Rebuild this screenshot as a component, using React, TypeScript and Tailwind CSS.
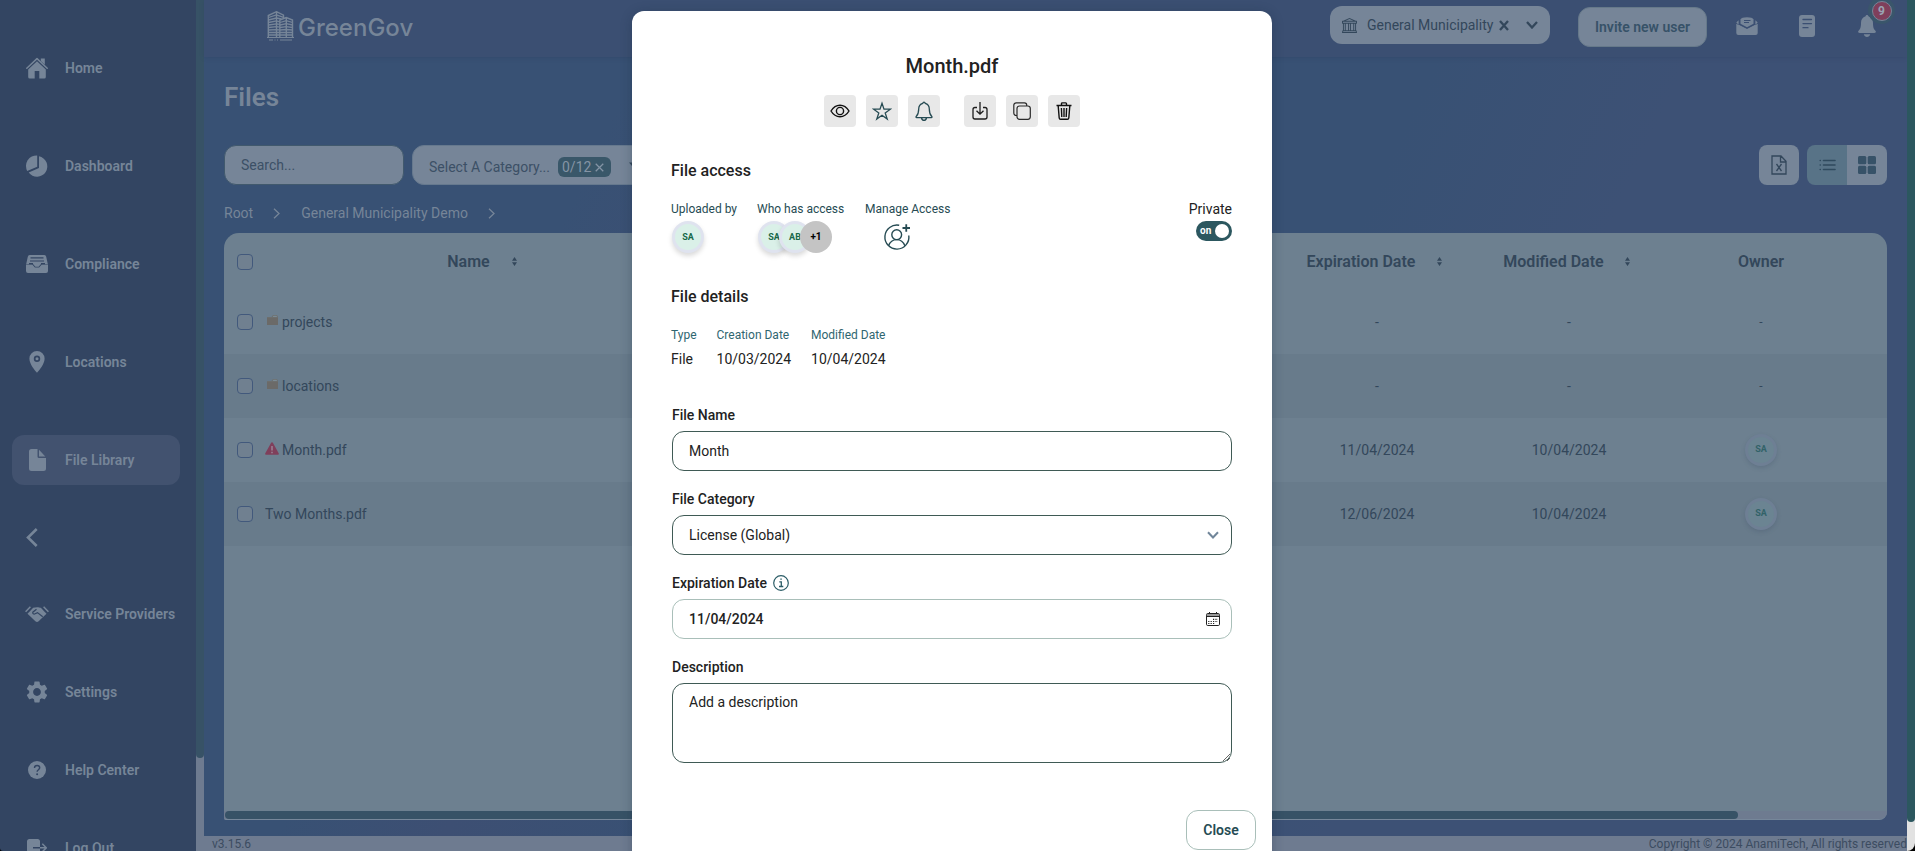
import React from 'react';
import { BsBank } from 'react-icons/bs';
import { MdSettings } from 'react-icons/md';

interface IconProps {
  className?: string;
}

const HomeIcon: React.FC<IconProps> = ({ className }) => (
  <svg viewBox="0 0 22 22" className={className} fill="currentColor">
    <path d="M11 4.3 2.2 12.4V20a1.5 1.5 0 0 0 1.5 1.5h5V14h4.6v7.500h5a1.500 1.500 0 0 0 1.500-1.500v-7.600z" />
    <path d="M.8 11.200 11 1.600l10.200 9.600" fill="none" stroke="currentColor" strokeWidth="1.500" strokeLinecap="round" strokeLinejoin="round" />
    <path d="M14.800 1.500h4v6.300l-4-3.700z" />
  </svg>
);

const PieIcon: React.FC<IconProps> = ({ className }) => (
  <svg viewBox="0 0 22 22" className={className} fill="currentColor">
    <path d="M11.200.4v11.400L1.200 16A10.700 10.700 0 0 1 11.200.4z" />
    <path d="M13 1.300a10.300 10.300 0 1 1-10.300 16.200L13 12.900z" />
  </svg>
);

const InboxIcon: React.FC<IconProps> = ({ className }) => (
  <svg viewBox="0 0 22 18" className={className} fill="currentColor">
    <path d="M3.800 0h14.400a2 2 0 0 1 2 1.700L21.800 9H15l-2.400 2.800H9.400L7 9H.2l1.600-7.300A2 2 0 0 1 3.800 0z" />
    <path d="M0 9.600h6.300l2.600 3h4.200l2.600-3H22V16a2 2 0 0 1-2 2H2a2 2 0 0 1-2-2z" />
    <path d="M4.500 2.900h13M4 6h14M3 8.700h4M15 8.700h4" stroke="#334562" strokeWidth="1.200" />
  </svg>
);

const PinIcon: React.FC<IconProps> = ({ className }) => (
  <svg viewBox="0 0 16 22" className={className} fill="currentColor">
    <path fillRule="evenodd" d="M8 0a7.600 7.600 0 0 1 7.600 7.700C15.600 13 10 19.500 8 21.800 6 19.500.4 13 .4 7.700A7.600 7.600 0 0 1 8 0zm0 4.500a3.200 3.200 0 1 0 0 6.400 3.200 3.200 0 0 0 0-6.400z" />
    <circle cx="8" cy="7.700" r="1.500" />
  </svg>
);

const FileIcon: React.FC<IconProps> = ({ className }) => (
  <svg viewBox="0 0 17 22" className={className} fill="currentColor">
    <path d="M2.500 0h6v7.500A1.500 1.500 0 0 0 10 9h7v10.500a2.500 2.500 0 0 1-2.500 2.500h-12A2.500 2.500 0 0 1 0 19.500v-17A2.500 2.500 0 0 1 2.500 0z" />
    <path d="M10 .8 16.300 7.500H10z" />
  </svg>
);

const HandshakeIcon: React.FC<IconProps> = ({ className }) => (
  <svg viewBox="0 0 24 16" className={className} fill="none">
    <path d="M.6 5.800 5.400.8M23.400 5.800 18.600.8" stroke="currentColor" strokeWidth="1.500" />
    <path d="M2.500 7.700 8.200 1.800c2-.9 6-.9 7.600 0l5.700 5.900-7.900 7.600c-1 .9-2.200.9-3.200 0z" fill="currentColor" />
    <path d="m11.500 3.200-3.700 3c-.5 1.400 1 2.300 2.300 1.600l2.400-1.200 5.200 4.200" stroke="#334562" strokeWidth="1.200" />
  </svg>
);

const HelpIcon: React.FC<IconProps> = ({ className }) => (
  <svg viewBox="0 0 18 18" className={className} fill="none">
    <circle cx="9" cy="9" r="9" fill="currentColor" />
    <path d="M6.500 7c0-3.400 5.200-3.200 5.200-.2 0 1.900-2.600 1.900-2.600 4" stroke="#334562" strokeWidth="1.400" />
    <circle cx="9.100" cy="13.200" r="1" fill="#334562" />
  </svg>
);

const LogoutIcon: React.FC<IconProps> = ({ className }) => (
  <svg viewBox="0 0 20 18" className={className} fill="none">
    <path d="M2.500 0h8A2.500 2.500 0 0 1 13 2.500v13a2.500 2.500 0 0 1-2.500 2.500h-8A2.500 2.500 0 0 1 0 15.500v-13A2.500 2.500 0 0 1 2.500 0z" fill="currentColor" />
    <path d="M6 8.800h8" stroke="#334562" strokeWidth="1.400" />
    <path d="M13 8.800h6M15.300 4.800l4 4-4 4" stroke="currentColor" strokeWidth="1.500" />
  </svg>
);

// two towers with slatted floors
const LogoIcon: React.FC<IconProps> = ({ className }) => (
  <svg viewBox="0 0 27 30" className={className} fill="none" stroke="currentColor">
    <path d="M1.300 26V4.500L9.500.7l7 3.500V7M9.500 1v25M12.800 26V9l6.500-2.500L25.500 9v17M19.300 7v19" strokeWidth="1.400" />
    <path d="M1.500 6.500l8-2.600 7 2.400M1.500 9l8-2 5 1M1.500 11.500l8-1.600 3.300.9M1.500 14l8-1.200 3.300.6M1.500 16.500l8-.8 3.300.4M1.500 19l8-.4 3.300.2M1.500 21.500h11.300M1.500 24h11.300" strokeWidth="1.300" />
    <path d="m13 11.500 6.300-1.800 6.200 1.800M13 14l6.300-1.300 6.200 1.300M13 16.500l6.300-.9 6.200.9M13 19l6.300-.5 6.200.5M13 21.500h12.500M13 24h12.500" strokeWidth="1.300" />
    <path d="M0 26.500h27M2 29h4M7.500 29h1M10 29h1M13 29h12" strokeWidth="1.200" />
  </svg>
);

const MailIcon: React.FC<IconProps> = ({ className }) => (
  <svg viewBox="0 0 22 18" className={className} fill="none">
    <path d="M.3 6.800 11 12.500l10.700-5.700V16a2 2 0 0 1-2 2H2.300a2 2 0 0 1-2-2z" fill="currentColor" />
    <path d="M.3 5.500 2.600 3.200v4.500zM21.700 5.500l-2.300-2.300v4.500z" fill="currentColor" />
    <path d="M4.500 2.600C5 1 7.500.2 11 .2s6 .8 6.500 2.400v4.200L11 10.300 4.500 6.800z" fill="currentColor" />
    <path d="M2.600 7.700 11 12l8.400-4.300v2.200L11 14 2.600 9.900z" fill="currentColor" />
    <path d="M8 3.500h6.500M8 5.500h5" stroke="#3b4f72" strokeWidth="1" />
  </svg>
);

const NoteIcon: React.FC<IconProps> = ({ className }) => (
  <svg viewBox="0 0 16 22" className={className} fill="none">
    <rect width="16" height="22" rx="3" fill="currentColor" />
    <path d="M4 4.500h8.500M4 8.600h8.500M4 12.700h5" stroke="#3b4f72" strokeWidth="1.300" strokeLinecap="round" />
  </svg>
);

const BellSolid: React.FC<IconProps> = ({ className }) => (
  <svg viewBox="0 0 18 22" className={className} fill="currentColor">
    <path d="M9 0c.9 0 1.300.6 1.400 1.300 3 .8 4.600 3.300 4.600 6.700 0 4.500.8 6 2.400 7.700 1 1.100.4 2.300-1 2.300H1.600c-1.400 0-2-1.200-1-2.300C2.200 14 3 12.500 3 8c0-3.400 1.600-5.900 4.600-6.700C7.700.6 8.100 0 9 0zM5.800 19.200h6.400C11.700 21 10.500 22 9 22s-2.700-1-3.200-2.800z" />
  </svg>
);

const SortIcon = () => (
  <svg viewBox="0 0 5 9" className="h-[9px] w-[5px]" fill="#33475b">
    <path d="M2.500 0 5 3.700H0zM2.500 9 5 5.300H0z" />
  </svg>
);

const Chevron: React.FC<IconProps> = ({ className }) => (
  <svg viewBox="0 0 7 11" className={className} fill="none" stroke="currentColor" strokeWidth="1.300">
    <path d="m1 .8 5 4.700-5 4.700" />
  </svg>
);

const FolderIcon = () => (
  <svg viewBox="0 0 11 10" className="h-[10px] w-[11px]">
    <path d="M0 2h4.500L6 0h4l1 2v8H0z" fill="#6d6f6e" />
    <path d="M6.300.8h3.300l.4 1.200H5.600z" fill="#7b8b95" />
    <path d="M0 3h11v7H0z" fill="#6b6a68" />
  </svg>
);

const WarningIcon = () => (
  <svg viewBox="0 0 14 13" className="h-[13px] w-[14px]">
    <path d="M7 .3c.5 0 .8.2 1 .6l5.700 10.300c.4.800 0 1.600-.9 1.600H1.200c-.9 0-1.300-.8-.9-1.600L6 .9C6.200.5 6.500.3 7 .3z" fill="#7f3f5b" />
    <path d="M7 4v4.500M7 9.700v1.500" stroke="#9a8496" strokeWidth="1.500" />
  </svg>
);

const navTop = [
  { label: 'Home', icon: <HomeIcon className="w-[22px]" /> },
  { label: 'Dashboard', icon: <PieIcon className="w-[22px]" /> },
  { label: 'Compliance', icon: <InboxIcon className="w-[22px]" /> },
  { label: 'Locations', icon: <PinIcon className="w-4" /> },
  { label: 'File Library', icon: <FileIcon className="w-[17px]" />, active: true },
];

const navBottom = [
  { label: 'Service Providers', icon: <HandshakeIcon className="w-6" /> },
  { label: 'Settings', icon: <MdSettings className="size-[26px]" /> },
  { label: 'Help Center', icon: <HelpIcon className="w-[18px]" /> },
  { label: 'Log Out', icon: <LogoutIcon className="w-[20px]" /> },
];

const NavItem: React.FC<{ label: string; icon: React.ReactNode; active?: boolean }> = ({ label, icon, active }) => (
  <div className={`flex h-[50px] w-[168px] shrink-0 items-center rounded-[12px] ${active ? 'bg-[#42526f]' : ''}`}>
    <div className="flex w-[50px] justify-center">{icon}</div>
    <span className="ml-[3px] text-[14px] font-semibold whitespace-nowrap">{label}</span>
  </div>
);

const Sidebar = () => (
  <aside className="flex h-full w-[204px] shrink-0 bg-[#334562] text-[#768598]">
    <nav className="flex w-[196px] flex-col overflow-hidden pl-3">
      <div className="flex flex-col gap-12 pt-[43px]">
        {navTop.map((item) => (
          <NavItem key={item.label} {...item} />
        ))}
      </div>
      <div className="flex h-[104px] shrink-0 items-center pl-[14px]">
        <svg viewBox="0 0 12 19" className="h-[19px] w-3" fill="none" stroke="currentColor" strokeWidth="2.600">
          <path d="M10.700 1 2 9.500l8.700 8.500" />
        </svg>
      </div>
      <div className="flex flex-col gap-7">
        {navBottom.map((item) => (
          <NavItem key={item.label} {...item} />
        ))}
      </div>
    </nav>
    <div className="h-full w-2 bg-[#6e7b90]">
      <div className="h-[758px] rounded-b-full bg-[#375266]" />
    </div>
  </aside>
);

const Header = () => (
  <header className="flex h-[57px] shrink-0 items-start bg-[#3b4f72] pl-[63px] text-[#768598] shadow-[0_1px_4px_rgba(40,60,90,0.25)]">
    <LogoIcon className="mt-[11px] h-[30px] w-[27px]" />
    <span className="mt-[12px] ml-[4px] font-['Inter',sans-serif] text-[24px] leading-[32px] font-medium">GreenGov</span>
    <div className="mt-[6px] ml-auto flex h-[38px] w-[220px] items-center rounded-[12px] bg-[#768598] pl-3 text-[#33475b]">
      <BsBank className="size-[15px]" />
      <span className="ml-[10px] w-[128px] text-[14px] whitespace-nowrap">General Municipality</span>
      <svg viewBox="0 0 10 11" className="ml-[4px] w-[10px]" fill="none" stroke="currentColor" strokeWidth="2.300">
        <path d="m1 1 8 9M9 1 1 10" />
      </svg>
      <svg viewBox="0 0 12 8" className="ml-[17px] w-3" fill="none" stroke="currentColor" strokeWidth="2.300">
        <path d="m1 1 5 5.500L11 1" />
      </svg>
    </div>
    <button className="mt-[7px] ml-[28px] h-10 w-[129px] rounded-[12px] border border-[#66798a] bg-[#768598] text-[14px] font-semibold text-[#375268]">Invite new user</button>
    <MailIcon className="mt-[17px] ml-[29px] w-[22px]" />
    <NoteIcon className="mt-[15px] ml-[41px] w-4" />
    <div className="relative mt-[15px] mr-[31px] ml-[43px] w-[18px]">
      <BellSolid className="w-[18px]" />
      <div className="absolute -top-[18px] left-[10px] flex size-[27px] items-center justify-center rounded-full bg-[#3a566b]">
        <div className="flex size-5 items-center justify-center rounded-full border border-[#768598] bg-[#7f3f5b] text-[12px] font-bold text-[#9aa3b3]">9</div>
      </div>
    </div>
  </header>
);

const Toolbar = () => (
  <div className="flex h-10 items-center text-[14px] text-[#3c5066]">
    <div className="flex h-10 w-[180px] items-center rounded-[12px] border border-[#41596d] bg-[#768598] pl-4">
      <span>Search...</span>
    </div>
    <div className="ml-2 flex h-10 w-[260px] items-center rounded-[12px] border border-[#66798e] bg-[#768598] pl-4">
      <span className="mt-1 w-[121px] whitespace-nowrap">Select A Category...</span>
      <span className="mt-1 ml-[8px] flex h-5 w-[53px] items-center rounded-[6px] bg-[#395769] pl-1 text-[#8494a5]">
        0/12
        <svg viewBox="0 0 10 10" className="ml-[4px] w-[9px]" fill="none" stroke="currentColor" strokeWidth="1.400">
          <path d="m.8.8 8.400 8.400M9.200.8.8 9.200" />
        </svg>
      </span>
      <svg viewBox="0 0 10 7" className="ml-[18px] w-[9px]" fill="#33475b">
        <path d="M0 .5h10L5 6.500z" />
      </svg>
    </div>
    <div className="ml-auto flex size-10 items-center justify-center rounded-[8px] bg-[#768598]">
      <svg viewBox="0 0 16 20" className="h-5 w-4" fill="none" stroke="#33475b" strokeWidth="1.300">
        <path d="M1 1h9l5 5.300V19H1zM9.500 1v6H15M5.500 9l5 7M10.500 9l-5 7" />
      </svg>
    </div>
    <div className="ml-2 flex overflow-hidden rounded-[8px]">
      <div className="flex size-10 items-center justify-center bg-[#587387]">
        <svg viewBox="0 0 17 12" className="w-[17px]" fill="none" stroke="#2f4a5e" strokeWidth="1.600" strokeLinecap="round">
          <path d="M4.500 1.500H16M4.500 6H16M4.500 10.500H16M1.200 1.500h.1M1.200 6h.1M1.200 10.500h.1" />
        </svg>
      </div>
      <div className="flex size-10 items-center justify-center bg-[#768598]">
        <svg viewBox="0 0 18 18" className="size-[18px]" fill="#375268">
          <rect width="8.300" height="8.300" rx="1.500" />
          <rect x="9.700" width="8.300" height="8.300" rx="1.500" />
          <rect y="9.700" width="8.300" height="8.300" rx="1.500" />
          <rect x="9.700" y="9.700" width="8.300" height="8.300" rx="1.500" />
        </svg>
      </div>
    </div>
  </div>
);

const rows = [
  { name: 'projects', kind: 'folder', expires: '-', modified: '-', owner: '' },
  { name: 'locations', kind: 'folder', expires: '-', modified: '-', owner: '' },
  { name: 'Month.pdf', kind: 'alert', expires: '11/04/2024', modified: '10/04/2024', owner: 'SA' },
  { name: 'Two Months.pdf', kind: 'file', expires: '12/06/2024', modified: '10/04/2024', owner: 'SA' },
];

const Checkbox = () => <div className="size-4 rounded-[4px] border border-[#42597c] bg-[#708090]" />;

const FilesTable = () => (
  <div className="flex h-[587px] flex-col overflow-hidden rounded-t-[15px] rounded-br-[8px] rounded-bl-[2px] border-b border-[#76879a] bg-[#6d8090] text-[#33475b]">
    <div className="flex h-[57px] shrink-0 items-center text-[16px] font-semibold">
      <div className="w-[40px] pl-[13px]"><Checkbox /></div>
      <div className="flex w-[436px] items-center justify-center gap-[22px]">Name <SortIcon /></div>
      <div className="flex-1" />
      <div className="flex w-[192px] items-center justify-center gap-[22px] pr-[5px]">Expiration Date <SortIcon /></div>
      <div className="flex w-[192px] items-center justify-center gap-[21px] pr-[5px]">Modified Date <SortIcon /></div>
      <div className="mr-[30px] w-[192px] text-center">Owner</div>
    </div>
    {rows.map((row) => (
      <div key={row.name} className="flex h-16 shrink-0 items-center text-[14px] even:bg-[#6d8090] odd:bg-[#687b8b]">
        <div className="w-[41px] pl-[13px]"><Checkbox /></div>
        <div className="flex items-center">
          {row.kind === 'folder' && <div className="mr-[4px] -mt-[4px] ml-[2px]"><FolderIcon /></div>}
          {row.kind === 'alert' && <div className="mr-[3px] -mt-[4px]"><WarningIcon /></div>}
          {row.name}
        </div>
        <div className="flex-1" />
        <div className="w-[192px] text-center">{row.expires}</div>
        <div className="w-[192px] text-center">{row.modified}</div>
        <div className="mr-[30px] flex w-[192px] justify-center">
          {row.owner ? (
            <div className="flex size-8 items-center justify-center rounded-full border-[3px] border-[#6e7f94] bg-[#6b8492] text-[9px] font-bold text-[#326268] shadow-[0_2px_4px_rgba(60,75,100,0.25)]">{row.owner}</div>
          ) : (
            <span className="text-[12px]">-</span>
          )}
        </div>
      </div>
    ))}
    <div className="flex-1" />
    <div className="h-2 shrink-0 bg-[#6e7b90]">
      <div className="ml-px h-2 w-[1513px] rounded-full bg-[#375266]" />
    </div>
  </div>
);

const ActionButton: React.FC<{ children: React.ReactNode; className?: string }> = ({ children, className = '' }) => (
  <button className={`flex size-8 items-center justify-center rounded-[4px] bg-[#e8e8e8] ${className}`}>{children}</button>
);

const Actions = () => (
  <div className="flex justify-center gap-[10px]">
    <ActionButton>
      <svg viewBox="0 0 20 14" className="-ml-px w-5" fill="none" stroke="#111" strokeWidth="1.400">
        <path d="M1 7c2.300-3.800 5.300-5.800 9-5.800S16.700 3.200 19 7c-2.300 3.800-5.300 5.800-9 5.800S3.300 10.800 1 7z" />
        <circle cx="10" cy="7" r="3.600" />
      </svg>
    </ActionButton>
    <ActionButton>
      <svg viewBox="0 0 20 20" className="w-5" fill="none" stroke="#264b53" strokeWidth="1.300" strokeLinejoin="miter">
        <path d="m10 2.200 2 6h6.400l-5.200 3.700 2 6.200-5.200-3.900-5.200 3.900 2-6.200L1.600 8.200H8z" />
      </svg>
    </ActionButton>
    <ActionButton>
      <svg viewBox="0 0 18 20" className="w-[18px]" fill="none" stroke="#264b53" strokeWidth="1.300">
        <path d="M9 1.200c-.6 0-1 .4-1.200 1.100C5 3 3.700 5.200 3.700 8c0 4.500-1 6-2.500 7.500-.4.500-.2 1.100.4 1.100h14.800c.6 0 .8-.6.4-1.100C15.300 14 14.300 12.500 14.300 8c0-2.800-1.300-5-4.100-5.700C10 1.600 9.600 1.200 9 1.200zM6.500 17c.3 1.500 1.200 2.300 2.500 2.300s2.200-.8 2.500-2.300" />
      </svg>
    </ActionButton>
    <ActionButton className="ml-[14px]">
      <svg viewBox="0 0 16 18" className="w-4" fill="none" stroke="#1d1d1d" strokeWidth="1.300">
        <path d="M5 5.500H3a2 2 0 0 0-2 2V15a2 2 0 0 0 2 2h10a2 2 0 0 0 2-2V7.500a2 2 0 0 0-2-2h-2M8 0v12M4.500 8.700 8 12.200l3.500-3.500" />
      </svg>
    </ActionButton>
    <ActionButton>
      <svg viewBox="0 0 18 18" className="-ml-px w-[18px]" fill="none" stroke="#2a2a2a" strokeWidth="1.200">
        <rect x="4" y="4" width="13.300" height="13.300" rx="2.500" />
        <path d="M4 13.500H3.200A2.400 2.400 0 0 1 .8 11.100V3.200A2.400 2.400 0 0 1 3.200.8h8.300a2.200 2.200 0 0 1 2.200 2.200v1" />
      </svg>
    </ActionButton>
    <ActionButton>
      <svg viewBox="0 0 16 18" className="w-4" fill="none" stroke="#111" strokeWidth="1.400">
        <path d="M.5 3.500h15M5.500 3V1.700c0-.5.300-.8.800-.8h3.400c.5 0 .8.300.8.800V3M2.200 4l1 12c.1.800.6 1.300 1.300 1.300h7c.7 0 1.200-.5 1.300-1.300l1-12M8 6v9M5.400 6l.4 9M10.600 6l-.4 9" />
      </svg>
    </ActionButton>
  </div>
);

const Avatar: React.FC<{ label: string; className?: string }> = ({ label, className = '' }) => (
  <div className={`flex size-8 items-center justify-center rounded-full border-[3px] border-[#dfe3ef] bg-[#daf0e8] text-[9px] font-bold text-[#17694a] shadow-[0_3px_5px_rgba(0,0,0,0.15)] ${className}`}>{label}</div>
);

const ManageIcon = () => (
  <svg viewBox="0 0 28 28" className="h-7 w-7" fill="none" stroke="#264b53" strokeWidth="1.400">
    <path d="M16.200 2.300A12 12 0 1 0 25.800 12.500" />
    <circle cx="13.700" cy="11.700" r="4.900" />
    <path d="M5.500 22.800c1.500-4 4.500-6.200 8.200-6.200s6.700 2.200 8.200 6.200" />
    <path d="M19.500 5H27M23.250 1.200v7.600" strokeWidth="1.800" />
  </svg>
);

const Label: React.FC<{ children: React.ReactNode }> = ({ children }) => (
  <div className="flex h-8 items-center text-[14px] font-medium">{children}</div>
);

const FileModal = () => (
  <div className="absolute inset-0 flex items-start pt-[11px] pl-[632px]">
    <div className="h-[860px] w-[640px] rounded-t-[12px] bg-white px-10 text-[#222] shadow-[0_2px_12px_rgba(20,40,60,0.3)]">
      <h2 className="pt-[41px] text-center text-[20px] leading-[28px] font-medium">Month.pdf</h2>
      <div className="mt-[15px]"><Actions /></div>

      <h3 className="mt-[32px] -ml-px text-[16px] leading-[24px] font-medium">File access</h3>
      <div className="mt-[17px] flex h-[54px] items-start text-[12px] leading-[18px] text-[#264b53]">
        <div className="w-[86px]">
          <span className="-ml-px">Uploaded by</span>
          <Avatar label="SA" className="mt-[3px]" />
        </div>
        <div className="w-[107px]">
          <span className="-ml-px">Who has access</span>
          <div className="mt-[3px] flex">
            <Avatar label="SA" />
            <Avatar label="AB" className="-ml-[11px]" />
            <div className="z-10 -ml-[11px] flex size-8 items-center justify-center rounded-full bg-[#c4c4c4] text-[10px] font-bold text-black">+1</div>
          </div>
        </div>
        <div>
          Manage Access
          <div className="mt-[5px] ml-[18px]"><ManageIcon /></div>
        </div>
        <div className="-mt-px ml-auto flex flex-col items-end">
          <span className="text-[14px] leading-[20px] text-[#222]">Private</span>
          <div className="mt-[2px] flex h-5 w-9 items-center justify-between rounded-full bg-[#2c575f] pr-[3px] pl-[4px] text-[10px] font-bold text-white">
            on
            <span className="size-[14px] rounded-full bg-white" />
          </div>
        </div>
      </div>

      <h3 className="mt-[31px] -ml-px text-[16px] leading-[24px] font-medium">File details</h3>
      <div className="mt-[17px] flex gap-5 text-[14px] leading-[20px]">
        {[['Type', 'File'], ['Creation Date', '10/03/2024'], ['Modified Date', '10/04/2024']].map(([k, v]) => (
          <div key={k} className="-ml-px pr-px">
            <div className="text-[12px] leading-[18px] text-[#2f6670]">{k}</div>
            <div className="mt-[5px]">{v}</div>
          </div>
        ))}
      </div>

      <div className="mt-[30px] text-[14px]">
        <Label>File Name</Label>
        <div className="flex h-10 items-center rounded-[12px] border border-[#3f5a55] px-4">Month</div>
        <div className="mt-3"><Label>File Category</Label></div>
        <div className="flex h-10 items-center justify-between rounded-[12px] border border-[#3f5a55] pr-3 pl-4">
          License (Global)
          <svg viewBox="0 0 12 8" className="w-3" fill="none" stroke="#71869a" strokeWidth="2">
            <path d="m1 1.200 5 5.300 5-5.300" />
          </svg>
        </div>
        <div className="mt-3">
          <Label>
            Expiration Date
            <svg viewBox="0 0 16 16" className="ml-[6px] size-4" fill="none" stroke="#2c5d67" strokeWidth="1.200">
              <circle cx="8" cy="8" r="7.300" />
              <path d="M6.300 6.800h2v4.500M6 11.500h4.300M7.300 4.200h1.500" strokeWidth="1.300" />
            </svg>
          </Label>
        </div>
        <div className="flex h-10 items-center justify-between rounded-[12px] border border-[#a9bfb9] pr-[11px] pl-4 font-medium">
          11/04/2024
          <svg viewBox="0 0 14 14" className="size-[14px]" fill="none" stroke="#222">
            <rect x=".5" y="1.500" width="13" height="12" rx="1.200" />
            <path d="M.5 3h13" stroke="#777" strokeWidth="1.500" />
            <path d="M.5 4.500h13M3.500 0v2M10.500 0v2" />
            <path d="M7 7.300h5M2.200 9.500h9.800M2.200 11.500h7" strokeDasharray="1.200 1.200" strokeWidth="1.200" />
          </svg>
        </div>
        <div className="mt-3"><Label>Description</Label></div>
        <textarea
          className="block h-20 w-full rounded-[12px] border border-[#3f5a55] px-4 py-[8px] leading-[20px] outline-none"
          defaultValue="Add a description"
        />
      </div>
      <div className="mt-[47px] -mr-6 flex justify-end">
        <button className="h-10 w-[70px] rounded-[12px] border border-[#a9bfb9] text-[14px] font-semibold text-[#264b53]">Close</button>
      </div>
    </div>
  </div>
);

export default function App() {
  return (
    <div className="h-[851px] w-full bg-black font-['Roboto',sans-serif]">
      <div className="relative flex h-full overflow-hidden rounded-br-[8px] rounded-bl-[3px]">
        <Sidebar />
        <main className="flex min-w-0 flex-1 flex-col bg-[linear-gradient(115deg,#385174_0%,#385174_22%,#3d4f73_30%,#385174_42%,#385174_60%,#3d5175_72%,#3d5175_100%)]">
          <Header />
          <div className="px-5">
            <h1 className="mt-[22px] text-[26px] leading-[36px] font-semibold text-[#768598]">Files</h1>
            <div className="mt-[30px]"><Toolbar /></div>
            <div className="mt-[16px] mb-[8px] flex h-6 items-center text-[14px] whitespace-nowrap text-[#768598]">
              <span>Root</span>
              <Chevron className="ml-[20px] w-[7px]" />
              <span className="ml-[21px]">General Municipality Demo</span>
              <Chevron className="ml-[20px] w-[7px]" />
            </div>
            <FilesTable />
          </div>
          <footer className="mt-auto flex h-[15px] justify-between bg-[#6e7b90] pl-2 text-[12px] leading-[16px] text-[#3c4c61]">
            <span>v3.15.6</span>
            <span>Copyright © 2024 AnamiTech, All rights reserved</span>
          </footer>
        </main>
        <div className="w-2 bg-[#e2e2e2]">
          <div className="h-[822px] rounded-b-full bg-[#2c575f]" />
        </div>
        <FileModal />
      </div>
    </div>
  );
}
